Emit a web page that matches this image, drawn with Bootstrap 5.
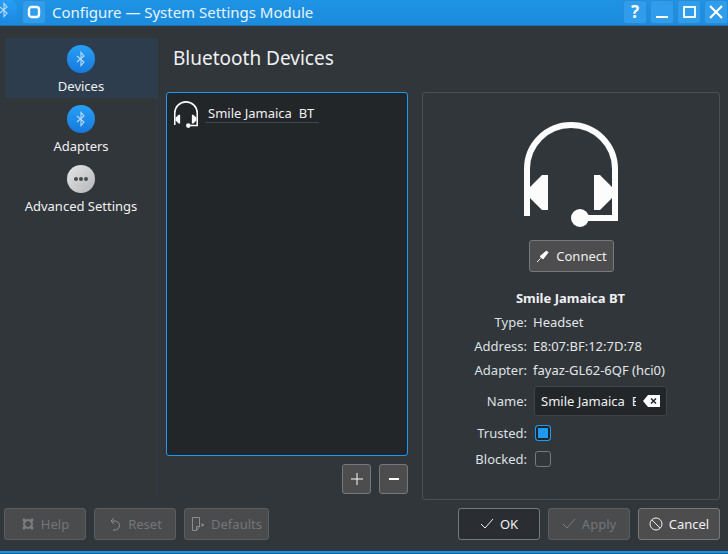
<!DOCTYPE html>
<html lang="en"><head><meta charset="utf-8"><title>Configure</title>
<link href="https://cdn.jsdelivr.net/npm/bootstrap@5.3.0/dist/css/bootstrap.min.css" rel="stylesheet">
<style>
html,body{margin:0;height:554px;overflow:hidden}
body{background:#31363b;color:#eff0f1;font-family:"Noto Sans",sans-serif;font-size:13px;line-height:18px}
.shell{height:554px}
.titlebar{height:26px;background:linear-gradient(#1f93e6,#1b8bdc);border-bottom:1px solid #1a6fb0;flex:none;color:#e8f4fd}
.titletext{font-size:15px;line-height:25px;margin-left:6px;letter-spacing:-.02px}
.tb-btn{width:24px;height:24px;background:#2f9cec;border:1px solid #2a8ad2;border-radius:3px;display:flex;align-items:center;justify-content:center}
.tb-q{font-size:17px;font-weight:700;color:#fff}
.tb-mark{width:18px;height:25px;overflow:hidden;margin-right:4px}
.tb-right{margin-left:auto;gap:3px;padding-right:0}
.mainrow{flex:1 1 auto;min-height:0;padding:12px 8px 0 5px}
.sidebar{width:153px;border-right:1px solid #2d3b49;height:460px;flex:none}
.sideitem{height:60px;padding-top:7px;text-align:center}
.sideitem.sel{background:#2e3d4e}
.disc{width:28px;height:28px;border-radius:50%;margin:0 auto 4px;display:flex;align-items:center;justify-content:center;background:linear-gradient(#27a0f5,#1679dc)}
.disc.tb-disc{margin:-3px 0 0 -9px;width:26px;height:26px;background:linear-gradient(#2aa2f7,#1c86e4)}
.disc.grey{background:linear-gradient(135deg,#e4e5e6,#b4b6b8)}
.content{flex:1 1 auto;min-width:0;padding-left:8px}
.pagehead{font-size:19px;line-height:28px;margin:6px 0 0 7px;height:48px;font-weight:400;color:#eff0f1}
.panes{gap:14px}
.leftpane{width:242px}
.devlist{height:364px;background:#232629;border:1px solid #1d99f3;border-radius:3px;padding:8px 7px}
.devname{margin-left:7px;margin-top:2px;border-bottom:1px solid #3a4652;padding:1px 0 0 3px;width:114px;height:20px;white-space:pre;font-size:13px;line-height:18px}
.listbtns{gap:8px;margin-top:8px}
.kbtn{background:#4d4d4d;border:1px solid #76797c;border-radius:3px;color:#eff0f1;font-size:13px;line-height:18px;padding:0;display:flex;align-items:center;justify-content:center;gap:6px;height:32px}
.kbtn:hover{background:#4d4d4d;color:#eff0f1;border-color:#76797c}
.kbtn.sq{width:29px;height:30px}
.kbtn.connectbtn{width:85px;margin:13px 0 0 106px}
.detail{width:298px;height:408px;border:1px solid #4a4f54;border-radius:3px;padding-top:29px}
.bigicon{display:block;margin-left:101px}
.devtitle{font-weight:700;text-align:center;margin-top:17px;height:18px;color:#eff0f1;margin-left:-1px}
.formgrid{display:grid;grid-template-columns:104px 1fr;column-gap:6px;margin-top:3px}
.flabel{text-align:right;color:#dfe1e3;height:24px;line-height:24px}
.fval{height:24px;line-height:24px;white-space:nowrap;color:#e4e6e8}
.lab-name{height:30px;line-height:30px;margin-top:4px}
.nameinput{width:133px;height:30px;margin:4px 0 0 1px;background:#232629;border:1px solid #3f4448;border-radius:3px;padding:0 6px;display:flex;align-items:center;justify-content:space-between;overflow:hidden}
.nameclip{width:95px;overflow:hidden;white-space:pre}
.lab-t{height:26px;line-height:26px}
.lab-first{margin-top:4px}
.chkbox.form-check-input{width:16px;height:16px;margin:5px 0 0 2px;background:#31363b;border:1px solid #76797c;border-radius:3px;box-shadow:none;display:block}
.chkbox.form-check-input:checked{border-color:#1d99f3;background:#1d99f3;background-image:none;box-shadow:inset 0 0 0 2px #232629}
.footerbar{flex:none;height:51px;padding:8px 8px 0 4px;gap:8px}
.fbtn{width:82px}
.fbtn.wide{width:85px}
.kbtn.off,.kbtn.off:disabled{background:#494b4d;border-color:#5c5f62;color:#747678;opacity:1}
.kbtn.pressed{background:#2a2e32;border-color:#76797c}
.bottomline{height:3px;flex:none;background:#1d8fe0;border-bottom:1px solid #17618f}
</style></head>
<body>
<svg width="0" height="0" class="d-block">
<defs>
<symbol id="headset" viewBox="0 0 94 105">
<path d="M3 94V47a44 44 0 0 1 88 0v49H56" fill="none" stroke="#fcfcfc" stroke-width="6"/>
<path d="M24 53h-6L6 65v11l12 12h6zM70 53h6l12 12v11L76 88h-6z" fill="#fcfcfc"/>
<circle cx="56" cy="96" r="9" fill="#fcfcfc"/>
</symbol>
<symbol id="btrune" viewBox="0 0 16 16">
<path d="M4 5l7 6-3 3.500V1.500l3 3.500-7 6" fill="none" stroke="#b9dcf7" stroke-width="1.100"/>
</symbol>
</defs>
</svg>
<div class="shell d-flex flex-column">
<div class="titlebar d-flex align-items-start">
<div class="tb-mark"><div class="disc tb-disc"><svg width="16" height="16"><use href="#btrune"/></svg></div></div>
<div class="tb-btn"><svg width="14" height="14" viewBox="0 0 14 14"><rect x="2" y="2" width="10" height="10" rx="2.500" fill="none" stroke="#fff" stroke-width="2.400"/></svg></div>
<div class="titletext">Configure — System Settings Module</div>
<div class="tb-right d-flex">
<div class="tb-btn"><span class="tb-q">?</span></div>
<div class="tb-btn"><svg width="14" height="14" viewBox="0 0 14 14"><path d="M1 12h12" stroke="#fff" stroke-width="2"/></svg></div>
<div class="tb-btn"><svg width="14" height="14" viewBox="0 0 14 14"><rect x="2" y="2" width="11" height="10" fill="none" stroke="#fff" stroke-width="1.800"/></svg></div>
<div class="tb-btn"><svg width="14" height="14" viewBox="0 0 14 14"><path d="M1 1l12 12M13 1L1 13" stroke="#fff" stroke-width="2.200"/></svg></div>
</div>
</div>
<div class="mainrow d-flex">
<div class="sidebar">
<div class="sideitem sel"><div class="disc"><svg width="16" height="16"><use href="#btrune"/></svg></div>Devices</div>
<div class="sideitem"><div class="disc"><svg width="16" height="16"><use href="#btrune"/></svg></div>Adapters</div>
<div class="sideitem"><div class="disc grey"><svg width="16" height="6" viewBox="0 0 16 6"><circle cx="3" cy="3" r="2" fill="#4a4d50"/><circle cx="8" cy="3" r="2" fill="#4a4d50"/><circle cx="13" cy="3" r="2" fill="#4a4d50"/></svg></div>Advanced Settings</div>
</div>
<div class="content">
<h1 class="pagehead">Bluetooth Devices</h1>
<div class="panes d-flex">
<div class="leftpane">
<div class="devlist d-flex align-items-start">
<svg width="24" height="27"><use href="#headset"/></svg>
<div class="devname">Smile Jamaica  BT</div>
</div>
<div class="listbtns d-flex justify-content-end">
<button type="button" class="btn kbtn sq"><svg width="14" height="14" viewBox="0 0 14 14"><path d="M7 1v12M1 7h12" stroke="#fcfcfc" stroke-width="1"/></svg></button>
<button type="button" class="btn kbtn sq"><svg width="14" height="14" viewBox="0 0 14 14"><path d="M2 7h10" stroke="#fcfcfc" stroke-width="2"/></svg></button>
</div>
</div>
<div class="detail">
<svg class="bigicon" width="94" height="105"><use href="#headset"/></svg>
<button type="button" class="btn kbtn connectbtn"><svg width="14" height="14" viewBox="0 0 14 14"><path d="M1 13l3.500-3.500M4 7.500L7 10l5-6.500-1.500-1.500z" fill="#fcfcfc" stroke="#fcfcfc"/></svg>Connect</button>
<div class="devtitle">Smile Jamaica BT</div>
<div class="formgrid">
<div class="flabel">Type:</div><div class="fval">Headset</div>
<div class="flabel">Address:</div><div class="fval">E8:07:BF:12:7D:78</div>
<div class="flabel">Adapter:</div><div class="fval">fayaz-GL62-6QF (hci0)</div>
<div class="flabel lab-name">Name:</div>
<div class="nameinput"><span class="nameclip">Smile Jamaica  BT</span><svg width="17" height="12" viewBox="0 0 17 12"><path d="M0 6l5-6h12v12H5z" fill="#fcfcfc"/><path d="M8 3.500l5 5M13 3.500l-5 5" stroke="#232629" stroke-width="1.500"/></svg></div>
<div class="flabel lab-t lab-first">Trusted:</div><div class="lab-first"><input class="form-check-input chkbox" type="checkbox" checked aria-label="Trusted"></div>
<div class="flabel lab-t">Blocked:</div><div><input class="form-check-input chkbox" type="checkbox" aria-label="Blocked"></div>
</div>
</div>
</div>
</div>
</div>
<div class="footerbar d-flex">
<button type="button" class="btn kbtn off fbtn" disabled><svg width="14" height="14" viewBox="0 0 14 14"><circle cx="7" cy="7" r="4" fill="none" stroke="#7a7c7e" stroke-width="2"/><path d="M1 3l2-2 3 3-2 2zM13 3l-2-2-3 3 2 2zM1 11l2 2 3-3-2-2zM13 11l-2 2-3-3 2-2z" fill="#7a7c7e"/></svg>Help</button>
<button type="button" class="btn kbtn off fbtn"  disabled><svg width="14" height="14" viewBox="0 0 14 14"><path d="M6 1L3 4l3 3M3 4h4a4.500 4.500 0 0 1 0 9H5" fill="none" stroke="#8a8c8e" stroke-width="1"/></svg>Reset</button>
<button type="button" class="btn kbtn off fbtn wide" disabled><svg width="14" height="14" viewBox="0 0 14 14"><path d="M1.500.5h7v9l-3 4h-4zM8.500 9.500h-3v4" fill="none" stroke="#8a8c8e" stroke-width="1"/><path d="M10.500 6l3 2-3 2z" fill="#8a8c8e"/></svg>Defaults</button>
<button type="button" class="btn kbtn fbtn pressed ms-auto"><svg width="14" height="12" viewBox="0 0 14 12"><path d="M1 6l4 4 8-9" fill="none" stroke="#eff0f1" stroke-width="1"/></svg>OK</button>
<button type="button" class="btn kbtn off fbtn" disabled><svg width="14" height="12" viewBox="0 0 14 12"><path d="M1 6l4 4 8-9" fill="none" stroke="#7a7c7e" stroke-width="1"/></svg>Apply</button>
<button type="button" class="btn kbtn fbtn"><svg width="14" height="14" viewBox="0 0 14 14"><circle cx="7" cy="7" r="6" fill="none" stroke="#eff0f1"/><path d="M3 3l8 8" stroke="#eff0f1"/></svg>Cancel</button>
</div>
<div class="bottomline"></div>
</div>
</body></html>
